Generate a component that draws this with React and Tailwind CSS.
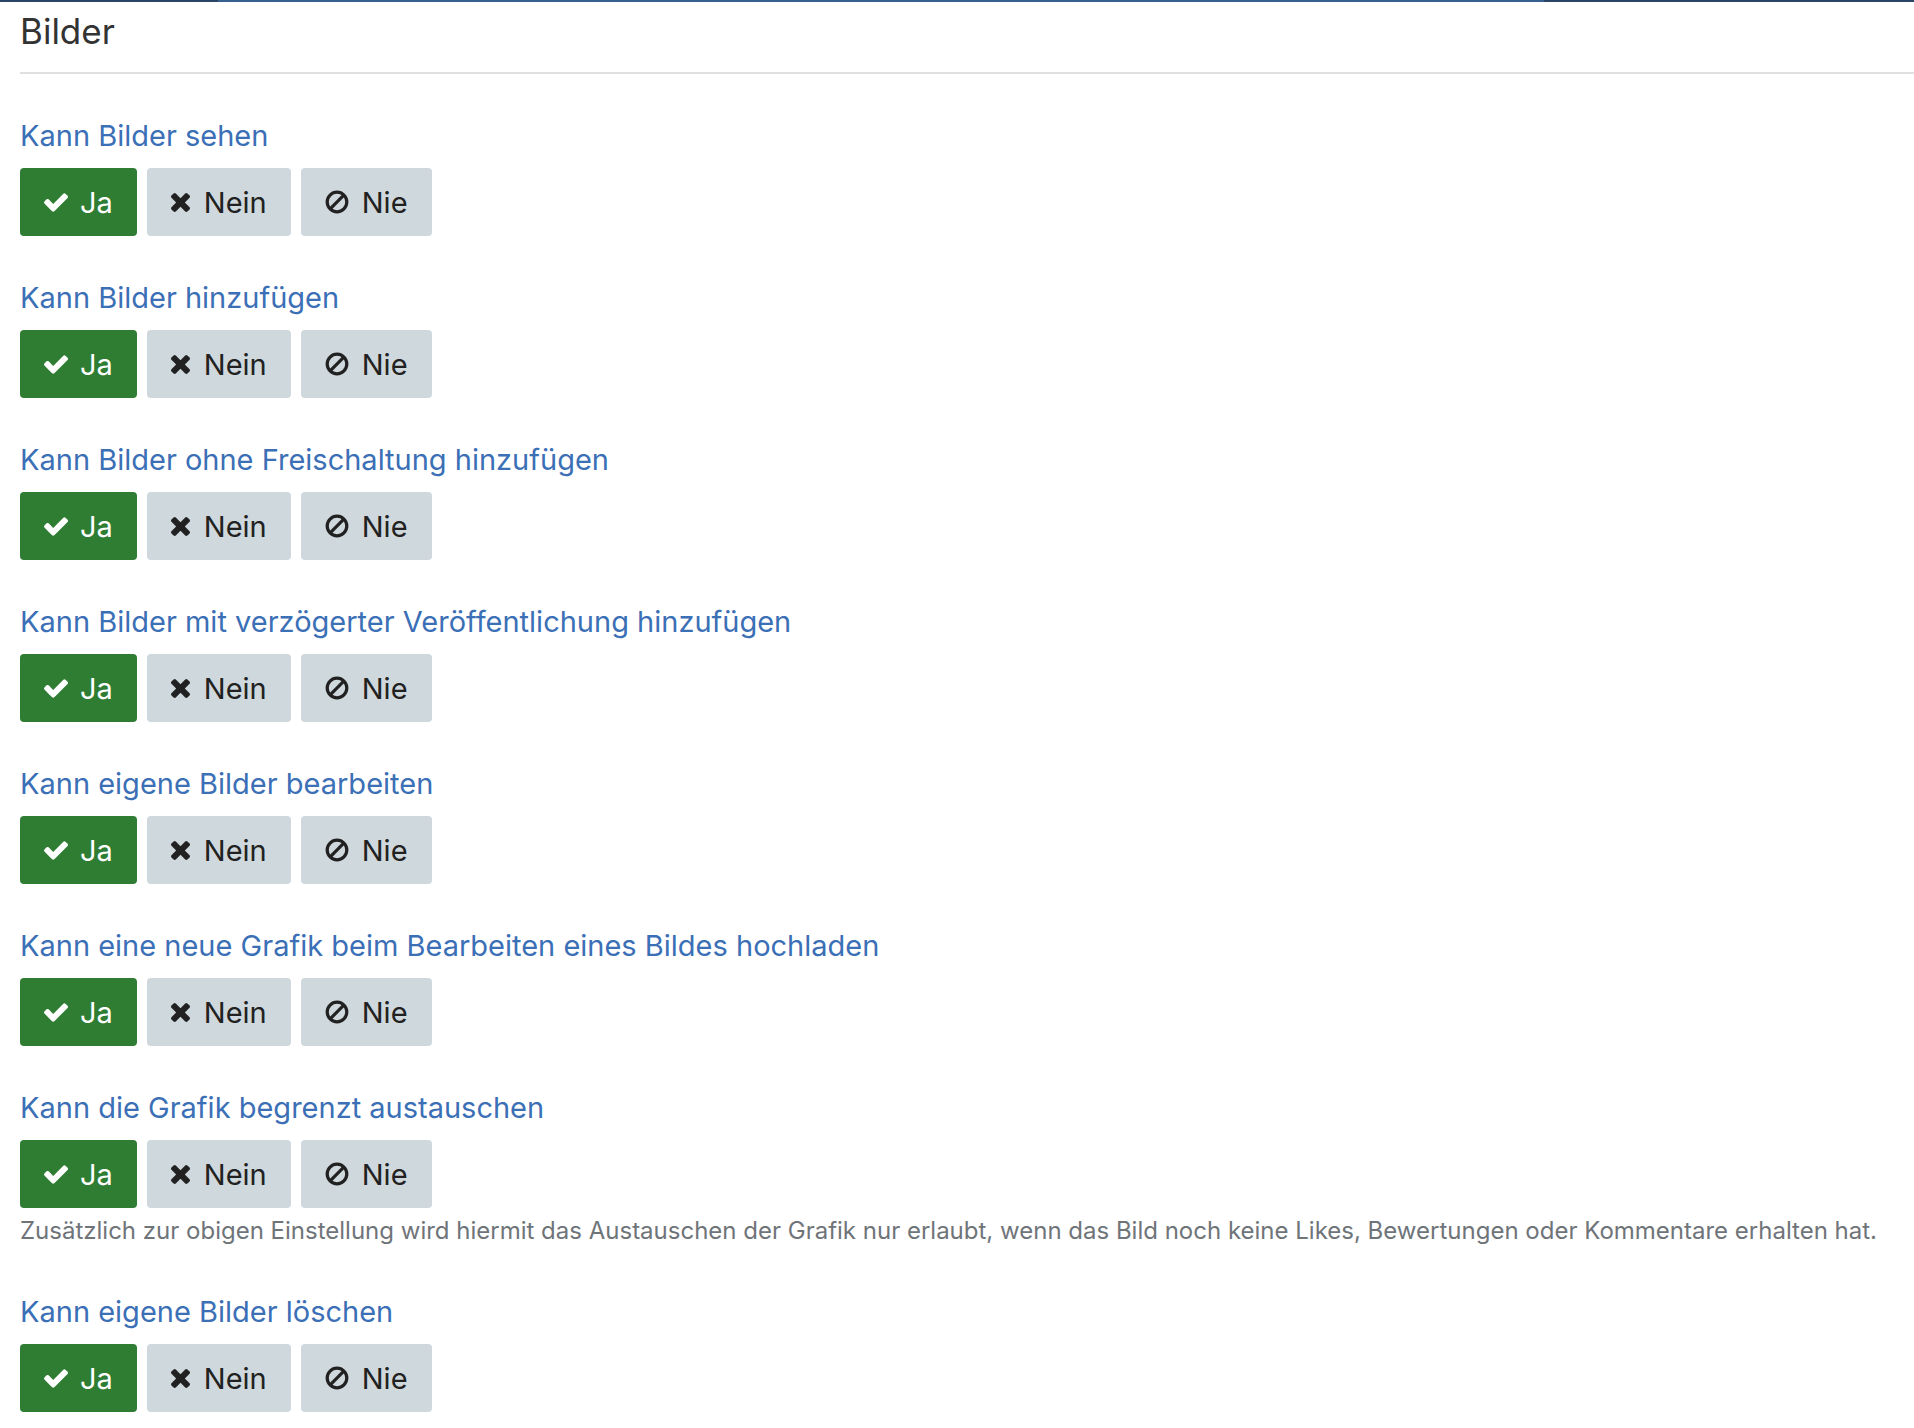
const rows = [
  { label: "Kann Bilder sehen" },
  { label: "Kann Bilder hinzufügen" },
  { label: "Kann Bilder ohne Freischaltung hinzufügen" },
  { label: "Kann Bilder mit verzögerter Veröffentlichung hinzufügen" },
  { label: "Kann eigene Bilder bearbeiten" },
  { label: "Kann eine neue Grafik beim Bearbeiten eines Bildes hochladen" },
  {
    label: "Kann die Grafik begrenzt austauschen",
    help: "Zusätzlich zur obigen Einstellung wird hiermit das Austauschen der Grafik nur erlaubt, wenn das Bild noch keine Likes, Bewertungen oder Kommentare erhalten hat.",
  },
  { label: "Kann eigene Bilder löschen" },
];

function CheckIcon() {
  return (
    <svg viewBox="121 334 1550 1188" className="h-[19px] w-[24px]" fill="currentColor">
      <path d="M1671 566q0 40-28 68l-724 724-136 136q-28 28-68 28t-68-28l-136-136-362-362q-28-28-28-68t28-68l136-136q28-28 68-28t68 28l294 295 656-657q28-28 68-28t68 28l136 136q28 28 28 68z" />
    </svg>
  );
}

function TimesIcon() {
  return (
    <svg viewBox="302 366 1188 1188" className="h-[19px] w-[19px]" fill="currentColor">
      <path d="M1490 1322q0 40-28 68l-136 136q-28 28-68 28t-68-28l-294-294-294 294q-28 28-68 28t-68-28l-136-136q-28-28-28-68t28-68l294-294-294-294q-28-28-28-68t28-68l136-136q28-28 68-28t68 28l294 294 294-294q28-28 68-28t68 28l136 136q28 28 28 68t-28 68l-294 294 294 294q28 28 28 68z" />
    </svg>
  );
}

function BanIcon() {
  return (
    <svg viewBox="0 0 24 24" className="h-[24px] w-[24px]" fill="none" stroke="currentColor">
      <circle cx="12" cy="12" r="9.8" strokeWidth="3.2" />
      <line x1="18.8" y1="5.2" x2="5.2" y2="18.8" strokeWidth="3.2" />
    </svg>
  );
}

function Choice({ value }) {
  const base =
    "flex h-[68px] items-center rounded-[4px] px-[24px] text-[29px] leading-none";
  return (
    <div className="flex gap-[10px]">
      <button
        type="button"
        className={`${base} gap-[12px] ${
          value === "ja" ? "bg-[#2e7d32] text-white" : "bg-[#cfd8dc] text-[#212121]"
        }`}
      >
        <CheckIcon />
        Ja
      </button>
      <button type="button" className={`${base} gap-[14px] bg-[#cfd8dc] text-[#212121]`}>
        <TimesIcon />
        Nein
      </button>
      <button type="button" className={`${base} gap-[13px] bg-[#cfd8dc] text-[#212121]`}>
        <BanIcon />
        Nie
      </button>
    </div>
  );
}

export default function App() {
  return (
    <div className="min-h-screen bg-white pb-[20px] font-['Inter','Liberation_Sans',sans-serif]">
      <div className="flex h-[2px]">
        <div className="w-[218px] bg-[#2a4566]" />
        <div className="w-[1326px] bg-[#35608f]" />
        <div className="flex-1 bg-[#2a4566]" />
      </div>

      <div className="pl-[20px]">
        <h1 className="mt-[12px] text-[35px] leading-none font-normal text-[#333333]">Bilder</h1>
        <div className="mt-[23px] mb-[1px] h-[2px] bg-[#e0e0e0]" />

        {rows.map((r) => (
          <div key={r.label} className="mt-[46px]">
            <div className="text-[29px] leading-[32px] text-[#3b6fb6]">{r.label}</div>
            <div className="mt-[16px]">
              <Choice value="ja" />
            </div>
            {r.help && (
              <p className="pb-[4px] mt-[8px] text-[24px] leading-[30px] text-[#6f7479]">
                {r.help}
              </p>
            )}
          </div>
        ))}
      </div>
    </div>
  );
}
